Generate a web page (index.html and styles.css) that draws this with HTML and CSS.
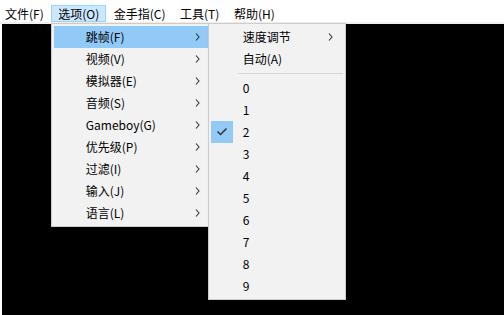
FILE: index.html
```html
<!DOCTYPE html>
<html lang="zh-CN">

<head>
  <meta charset="UTF-8">
  <meta name="viewport" content="width=device-width, initial-scale=1.0">
  <title>模拟器</title>
  <link rel="stylesheet" href="styles.css">
</head>

<body>
  <div class="menubar">
    <div class="menubar-item">文件(F)</div>
    <div class="menubar-item open">选项(O)
      <div class="dropdown">
        <div class="menu-row active">
          <span class="label">跳帧(F)</span>
          <svg class="arrow" width="5" height="8" viewBox="0 0 5 8"><polyline points="1,0.5 4,4 1,7.5" /></svg>
          <div class="dropdown submenu">
            <div class="menu-row">
              <span class="label">速度调节</span>
              <svg class="arrow" width="5" height="8" viewBox="0 0 5 8"><polyline points="1,0.5 4,4 1,7.5" /></svg>
            </div>
            <div class="menu-row"><span class="label">自动(A)</span></div>
            <div class="separator"></div>
            <div class="menu-row"><span class="label">0</span></div>
            <div class="menu-row"><span class="label">1</span></div>
            <div class="menu-row checked">
              <span class="check">
                <svg width="22" height="22" viewBox="0 0 22 22"><polyline points="6.5,10.5 9.5,13.5 15.5,7.5" /></svg>
              </span>
              <span class="label">2</span>
            </div>
            <div class="menu-row"><span class="label">3</span></div>
            <div class="menu-row"><span class="label">4</span></div>
            <div class="menu-row"><span class="label">5</span></div>
            <div class="menu-row"><span class="label">6</span></div>
            <div class="menu-row"><span class="label">7</span></div>
            <div class="menu-row"><span class="label">8</span></div>
            <div class="menu-row"><span class="label">9</span></div>
          </div>
        </div>
        <div class="menu-row">
          <span class="label">视频(V)</span>
          <svg class="arrow" width="5" height="8" viewBox="0 0 5 8"><polyline points="1,0.5 4,4 1,7.5" /></svg>
        </div>
        <div class="menu-row">
          <span class="label">模拟器(E)</span>
          <svg class="arrow" width="5" height="8" viewBox="0 0 5 8"><polyline points="1,0.5 4,4 1,7.5" /></svg>
        </div>
        <div class="menu-row">
          <span class="label">音频(S)</span>
          <svg class="arrow" width="5" height="8" viewBox="0 0 5 8"><polyline points="1,0.5 4,4 1,7.5" /></svg>
        </div>
        <div class="menu-row">
          <span class="label">Gameboy(G)</span>
          <svg class="arrow" width="5" height="8" viewBox="0 0 5 8"><polyline points="1,0.5 4,4 1,7.5" /></svg>
        </div>
        <div class="menu-row">
          <span class="label">优先级(P)</span>
          <svg class="arrow" width="5" height="8" viewBox="0 0 5 8"><polyline points="1,0.5 4,4 1,7.5" /></svg>
        </div>
        <div class="menu-row">
          <span class="label">过滤(I)</span>
          <svg class="arrow" width="5" height="8" viewBox="0 0 5 8"><polyline points="1,0.5 4,4 1,7.5" /></svg>
        </div>
        <div class="menu-row">
          <span class="label">输入(J)</span>
          <svg class="arrow" width="5" height="8" viewBox="0 0 5 8"><polyline points="1,0.5 4,4 1,7.5" /></svg>
        </div>
        <div class="menu-row">
          <span class="label">语言(L)</span>
          <svg class="arrow" width="5" height="8" viewBox="0 0 5 8"><polyline points="1,0.5 4,4 1,7.5" /></svg>
        </div>
      </div>
    </div>
    <div class="menubar-item">金手指(C)</div>
    <div class="menubar-item">工具(T)</div>
    <div class="menubar-item">帮助(H)</div>
  </div>

  <div class="screen"></div>
</body>

</html>
```

FILE: styles.css
```css
/* Janela do emulador */
body {
  font-family: "Noto Sans CJK SC", "Noto Sans", sans-serif;
  font-size: 12px;
  color: #000;
  background-color: #fff;
  margin: 0;
  width: 504px;
  height: 315px;
  overflow: hidden;
}

.menubar {
  display: flex;
  height: 24px;
  box-sizing: border-box;
  padding-top: 5px;
  border-bottom: 2px solid #f0f0f0;
}

.menubar-item {
  position: relative;
  padding: 0 6px 0 6.5px;
  line-height: 15px;
  border: 1px solid transparent;
  white-space: nowrap;
}

.menubar-item:first-child {
  margin-left: -2.5px;
}

.menubar-item.open {
  background-color: #cce8ff;
  border-color: #99d1ff;
}

.screen {
  margin-left: 2px;
  height: 291px;
  background-color: #000;
}

/* Menus suspensos */
.dropdown {
  position: absolute;
  top: 17px;
  left: -1px;
  z-index: 10;
  width: 154px;
  padding: 2px;
  background-color: #f2f2f2;
  border: 1px solid #cccccc;
  box-shadow: 2px 2px 3px rgba(0, 0, 0, 0.25);
}

.submenu {
  top: -3px;
  left: 100%;
  width: 132px;
  z-index: 20;
}

.menu-row {
  position: relative;
  display: flex;
  align-items: center;
  height: 22px;
  padding-left: 32px;
  padding-right: 8px;
}

.submenu .menu-row {
  padding-right: 10px;
}

.menu-row.active {
  background-color: #91c9f7;
}

.label {
  flex: 1;
  line-height: 22px;
}

.arrow polyline {
  fill: none;
  stroke: #333;
  stroke-width: 1.1;
}

.check {
  position: absolute;
  left: 0;
  top: 0;
  width: 22px;
  height: 22px;
  background-color: #91c9f7;
}

.check svg {
  display: block;
}

.check polyline {
  fill: none;
  stroke: #333;
  stroke-width: 1.5;
}

.separator {
  height: 1px;
  margin: 3px 0 3px 27px;
  background-color: #d7d7d7;
}
```
